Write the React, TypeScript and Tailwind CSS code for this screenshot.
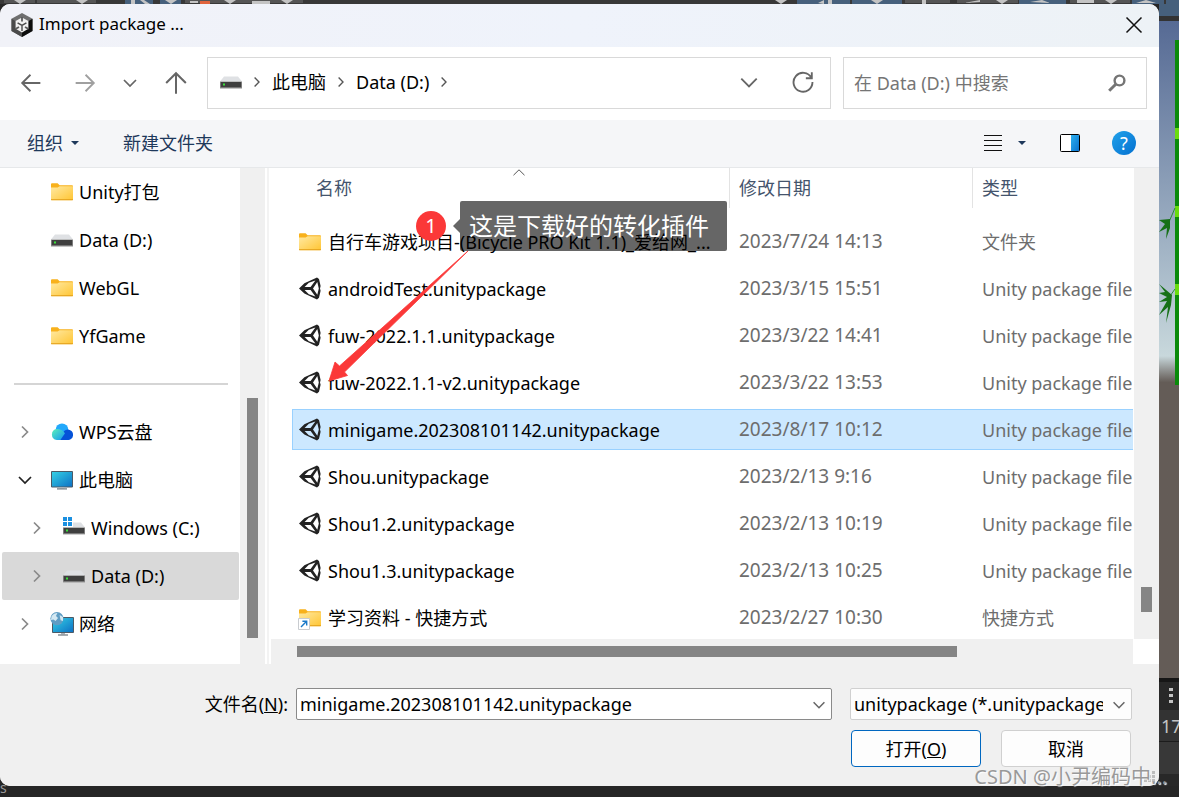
import type { ReactNode } from "react";

const FolderIcon = () => (
	<svg width="22" height="18" viewBox="0 0 22 18" className="shrink-0">
		<defs>
			<linearGradient id="folder" x1="0" y1="0" x2="1" y2="1">
				<stop offset="0" stopColor="#ffe9a2" />
				<stop offset="1" stopColor="#ffc533" />
			</linearGradient>
		</defs>
		<path d="M0 1.2Q0 .2 1 .2H6.6L8.6 2.2H21Q22 2.2 22 3.2V8H0Z" fill="#f8b11c" />
		<path d="M0 4.6H6.6L8.6 3.2H22V16.2Q22 17.2 21 17.2H1Q0 17.2 0 16.2Z" fill="url(#folder)" />
		<path d="M0 16.7H22" stroke="#e3a01c" />
	</svg>
);

const ShortcutIcon = () => (
	<span className="relative flex shrink-0">
		<FolderIcon />
		<svg width="12" height="12" viewBox="0 0 12 12" className="absolute -bottom-[3px] -left-px">
			<path d="M.5.5H11.5V11.5H.5Z" fill="#fff" stroke="#c9ccd0" />
			<path d="M3 9L8.4 3.6M4.4 3.3H8.7V7.6" fill="none" stroke="#1878c8" strokeWidth="1.4" />
		</svg>
	</span>
);

const DriveIcon = ({ system = false }: { system?: boolean }) => (
	<svg width="22" height="18" viewBox="0 0 22 18" className="shrink-0 overflow-visible">
		<path d="M4 3.5H18L22 8.6H0Z" fill="#dfe1e4" />
		<path d="M0 8.4H22V15.4H0Z" fill="#8b8b8b" />
		<path d="M.8 9H21.2V14.2H.8Z" fill="#3f3f3f" />
		<path d="M3 10.4H5V12.4H3Z" fill="#3ae03a" />
		{system && (
			<>
				<path d="M0-2H10V8H0Z" fill="#fff" />
				<path d="M0-2H4V2H0ZM5-2H9V2H5ZM0 3H4V7H0ZM5 3H9V7H5Z" fill="#1a8fe0" />
			</>
		)}
	</svg>
);

const CloudIcon = () => (
	<svg width="22" height="18" viewBox="0 0 22 18" className="shrink-0">
		<defs>
			<linearGradient id="cloud" x1="0" y1="0" x2="1" y2="1">
				<stop offset="0" stopColor="#5af0b8" />
				<stop offset="1" stopColor="#1496f5" />
			</linearGradient>
		</defs>
		<circle cx="11" cy="6.8" r="6.4" fill="#22a8fb" />
		<circle cx="16.8" cy="11.8" r="5.3" fill="#0553d8" />
		<path d="M7 17L14 9L18 17Z" fill="#0553d8" />
		<path d="M5.8 6A5.6 5.6 0 0 0 5.8 17.1H9.4L14 10.2Q10.8 6 5.8 6Z" fill="url(#cloud)" />
	</svg>
);

const MonitorIcon = () => (
	<svg width="22" height="20" viewBox="0 0 22 20" className="shrink-0">
		<defs>
			<linearGradient id="screen" x1="0" y1="0" x2="1" y2="1">
				<stop offset="0" stopColor="#35d3e6" />
				<stop offset="1" stopColor="#0d6fc4" />
			</linearGradient>
		</defs>
		<path d="M.5 1.5H21.5V17H.5Z" fill="url(#screen)" stroke="#4c5a66" />
		<path d="M8.6 17H13.4V18.4H8.6Z" fill="#a9b1b8" />
		<path d="M6 18.9H16" stroke="#6b747c" strokeWidth="1.2" />
	</svg>
);

const NetworkIcon = () => (
	<svg width="24" height="24" viewBox="0 0 24 24" className="-mr-px -ml-px shrink-0">
		<path d="M2.5 5.5H23.5V20.5H2.5Z" fill="url(#screen)" stroke="#4c5a66" />
		<path d="M11 21H15V22.4H11Z" fill="#a9b1b8" />
		<path d="M8 23H18" stroke="#6b747c" strokeWidth="1.2" />
		<circle cx="7" cy="6.6" r="6.6" fill="#5f9dc4" />
		<path d="M1.6 4Q4 .8 7.4 1L6 4L8 6L5.6 9L3.4 7.4L1 8ZM9.6 3L13 5V9L10.6 8.2Z" fill="#d3e8f2" />
	</svg>
);

const HexIcon = () => (
	<svg width="22" height="24" viewBox="0 0 22 24" className="shrink-0">
		<path d="M11 0L21.5 5.8V18L11 24L.5 18V5.8Z" fill="#6f6f6f" />
		<path d="M11 12L21.5 5.8V18L11 24Z" fill="#0c0c0c" />
		<path d="M11 12L.5 5.8V18L11 24Z" fill="#4a4a4a" />
		<path d="M11 4.4L17.4 8V15.8L11 19.6L4.6 15.8V8Z" fill="#f1f1f1" />
		<path d="M11 4V8.6M4.4 16L8 14M17.6 16L14 14" stroke="#5a5a5a" strokeWidth="1.8" />
		<path d="M11 12.4V18M11 12.4L6.6 9.8M11 12.4L15.4 9.8" stroke="#4a4a4a" strokeWidth="1.4" />
	</svg>
);

const UnityIcon = () => (
	<svg width="22" height="24" viewBox="0 0 22 24" className="shrink-0">
		<path
			fill="#222"
			fillRule="evenodd"
			d="M0 11.4L5.4 6.2L18 .4L20 2L21.6 9L21 11.4L21.6 13.8L20 20.8L18 22.6L5.4 16.6ZM5.6 9.9H11.6L16.4 3.6L9.8 5.8ZM5.6 12.9L9.8 17.2L16.4 19.4L11.6 12.9ZM14 11.4L18.3 17.8L19.8 11.4L18.3 5Z"
		/>
	</svg>
);

// Line glyph used for every arrow and chevron
const Stroke = ({ d, size, className = "" }: { d: string; size: number; className?: string }) => (
	<svg
		width={size}
		height={size}
		viewBox="0 0 20 20"
		fill="none"
		stroke="currentColor"
		strokeWidth="1.7"
		className={`shrink-0 ${className}`}
	>
		<path d={d} />
	</svg>
);

const RIGHT = "M7 4.5L12.5 10L7 15.5";
const DOWN = "M4 7L10 13L16 7";

const Caret = () => (
	<svg width="8" height="4" viewBox="0 0 8 4" className="shrink-0">
		<path d="M0 0H8L4 4Z" fill="#1e395b" />
	</svg>
);

type TreeItem = {
	label: string;
	icon: ReactNode;
	state?: "open" | "closed";
	nested?: boolean;
	selected?: boolean;
};

const pinned: TreeItem[] = [
	{ label: "Unity打包", icon: <FolderIcon /> },
	{ label: "Data (D:)", icon: <DriveIcon /> },
	{ label: "WebGL", icon: <FolderIcon /> },
	{ label: "YfGame", icon: <FolderIcon /> },
];

const places: TreeItem[] = [
	{ label: "WPS云盘", icon: <CloudIcon />, state: "closed" },
	{ label: "此电脑", icon: <MonitorIcon />, state: "open" },
	{ label: "Windows (C:)", icon: <DriveIcon system />, state: "closed", nested: true },
	{ label: "Data (D:)", icon: <DriveIcon />, state: "closed", nested: true, selected: true },
	{ label: "网络", icon: <NetworkIcon />, state: "closed" },
];

const files = [
	{ name: "自行车游戏项目-(Bicycle PRO Kit 1.1)_爱给网_...", date: "2023/7/24 14:13", type: "文件夹" },
	{ name: "androidTest.unitypackage", date: "2023/3/15 15:51", type: "Unity package file" },
	{ name: "fuw-2022.1.1.unitypackage", date: "2023/3/22 14:41", type: "Unity package file" },
	{ name: "fuw-2022.1.1-v2.unitypackage", date: "2023/3/22 13:53", type: "Unity package file" },
	{
		name: "minigame.202308101142.unitypackage",
		date: "2023/8/17 10:12",
		type: "Unity package file",
		selected: true,
	},
	{ name: "Shou.unitypackage", date: "2023/2/13 9:16", type: "Unity package file" },
	{ name: "Shou1.2.unitypackage", date: "2023/2/13 10:19", type: "Unity package file" },
	{ name: "Shou1.3.unitypackage", date: "2023/2/13 10:25", type: "Unity package file" },
	{ name: "学习资料 - 快捷方式", date: "2023/2/27 10:30", type: "快捷方式" },
];

const FileIcon = ({ type }: { type: string }) => {
	if (type === "文件夹") return <FolderIcon />;
	if (type === "快捷方式") return <ShortcutIcon />;
	return <UnityIcon />;
};

const TreeRow = ({ item }: { item: TreeItem }) => (
	<li className="pr-px pl-0.5">
		<button
			className={`flex h-12 w-full items-center rounded-xs whitespace-nowrap ${
				item.nested ? "pl-[25px]" : "pl-[13px]"
			} ${item.selected ? "bg-[#d9d9d9]" : ""}`}
		>
			<span className="flex w-9 shrink-0">
				{item.state === "closed" && <Stroke d={RIGHT} size={20} className="text-[#8a8a8a]" />}
				{item.state === "open" && <Stroke d={DOWN} size={20} className="text-[#222]" />}
			</span>
			{item.icon}
			<span className="ml-1.5">{item.label}</span>
		</button>
	</li>
);

const TitleBar = () => (
	<header className="flex h-[43px] items-center bg-linear-to-r from-[#f1f2f8] via-[#eff3fb] to-[#edf2f6] pr-4 pb-0.5 pl-[11px]">
		<HexIcon />
		<h1 className="ml-1.5 grow text-[17px]">Import package ...</h1>
		<button aria-label="Close">
			<svg width="18" height="18" viewBox="0 0 18 18" stroke="#111" strokeWidth="1.5">
				<path d="M1.5 1.5L16.5 16.5M16.5 1.5L1.5 16.5" />
			</svg>
		</button>
	</header>
);

const NavBar = () => (
	<nav className="flex h-[73px] items-center gap-3 bg-white px-3 pb-px">
		<div className="flex w-[183px] items-center text-[#666]">
			<button aria-label="Back" className="ml-2">
				<Stroke d="M18.5 10H2M9.5 2.5L2 10L9.5 17.5" size={22} />
			</button>
			<button aria-label="Forward" className="ml-8 text-[#a0a0a0]">
				<Stroke d="M1.5 10H18M10.5 2.5L18 10L10.5 17.5" size={22} />
			</button>
			<button aria-label="Recent" className="ml-6">
				<Stroke d={DOWN} size={20} />
			</button>
			<button aria-label="Up" className="ml-6">
				<Stroke d="M10 19V1.8M1.8 10L10 1.8L18.2 10" size={24} />
			</button>
		</div>
		<div className="flex h-13 grow items-center border border-[#d9d9d9] pr-4 pb-0.5 pl-3">
			<DriveIcon />
			<Stroke d={RIGHT} size={16} className="mx-[7px] text-[#555]" />
			<button>此电脑</button>
			<Stroke d={RIGHT} size={16} className="mx-[7px] text-[#555]" />
			<button>Data (D:)</button>
			<Stroke d={RIGHT} size={16} className="mx-[7px] text-[#555]" />
			<button aria-label="History" className="mr-8 ml-auto text-[#666]">
				<Stroke d="M3 7L10 14L17 7" size={22} />
			</button>
			<button aria-label="Refresh" className="text-[#666]">
				<Stroke d="M17.6 6.2A8.6 8.6 0 1 0 18.6 10M18 1.2V6.6H12.6" size={22} />
			</button>
		</div>
		<div className="flex h-13 w-[304px] items-center border border-[#d9d9d9] pr-5 pl-[10px]">
			<input
				aria-label="Search"
				placeholder="在 Data (D:) 中搜索"
				className="w-full min-w-0 grow outline-none placeholder:text-[#757575]"
			/>
			<svg width="18" height="18" viewBox="0 0 18 18" fill="none" stroke="#757575" className="shrink-0">
				<circle cx="11.5" cy="6.5" r="4.9" strokeWidth="2.4" />
				<path d="M8 10L1.2 16.8" strokeWidth="3" />
			</svg>
		</div>
	</nav>
);

const Toolbar = () => (
	<div className="flex h-12 items-center border-b border-[#e6e8ea] bg-[#f5f6f8] pr-[23px] pb-0.5 pl-[27px] text-[#1e395b]">
		<button className="flex items-center gap-2">
			组织
			<Caret />
		</button>
		<button className="ml-11 grow text-left">新建文件夹</button>
		<button aria-label="View" className="flex items-center gap-4">
			<svg width="18" height="18" viewBox="0 0 18 18" stroke="#111" className="mt-px">
				<path d="M0 1.5H18M0 6.5H18M0 11.5H18M0 16.5H18" />
			</svg>
			<Caret />
		</button>
		<button aria-label="Preview pane" className="ml-[34px]">
			<svg width="20" height="18" viewBox="0 0 20 18">
				<defs>
					<linearGradient id="pane" x1="0" y1="0" x2="1" y2="1">
						<stop offset="0" stopColor="#2cb0ee" />
						<stop offset="1" stopColor="#0a72d0" />
					</linearGradient>
				</defs>
				<rect x=".5" y=".5" width="19" height="17" rx="1" fill="#fff" stroke="#000" />
				<path d="M11 1H19V17H11Z" fill="url(#pane)" />
			</svg>
		</button>
		<button
			aria-label="Help"
			className="ml-8 size-6 rounded-full bg-linear-to-br from-[#22a2ea] to-[#0570d0] text-center leading-6 text-white"
		>
			?
		</button>
	</div>
);

const Sidebar = () => (
	<div className="flex shrink-0">
		<ul className="w-60 pb-4">
			{pinned.map((item) => (
				<TreeRow key={item.label} item={item} />
			))}
			<li className="flex h-12 items-center pr-3 pl-[14px]">
				<hr className="w-full border-t-2 border-[#d5d5d5]" />
			</li>
			{places.map((item) => (
				<TreeRow key={item.label} item={item} />
			))}
		</ul>
		<div className="flex w-[25px] flex-col items-center justify-end bg-[#f0f0f0] pb-[26px]">
			<div className="h-60 w-[11px] bg-[#858585]" />
		</div>
		<div className="ml-0.5 w-0.5 bg-[#f3f3f3]" />
	</div>
);

const FileTable = () => (
	<table className="w-full table-fixed border-separate border-spacing-0 text-left whitespace-nowrap">
		<thead>
			<tr className="text-[#44546c]">
				<th className="w-[438px] p-0 pb-[7px] font-normal">
					<div className="relative h-10 border-r border-[#e3e3e3] pt-2 pl-6 leading-6">
						名称
						<svg
							width="12"
							height="7"
							viewBox="0 0 12 7"
							fill="none"
							stroke="#555"
							className="absolute top-px left-[calc(50%+2px)]"
						>
							<path d="M.5 6.2L6 .8L11.5 6.2" />
						</svg>
					</div>
				</th>
				<th className="w-[243px] p-0 pb-[7px] font-normal">
					<div className="h-10 border-r border-[#e3e3e3] pt-2 pl-[9px] leading-6">修改日期</div>
				</th>
				<th className="p-0 pb-[7px] font-normal">
					<div className="h-10 pt-2 pl-[9px] leading-6">类型</div>
				</th>
			</tr>
		</thead>
		<tbody>
			{files.map(({ name, date, type, selected }) => {
				const tone = selected ? "border-y border-[#99d1ff] bg-[#cce8ff]" : "";
				return (
					<tr key={name} className="text-[#6d6d6d]">
						<td className="p-0 pt-1.5">
							<div
								className={`flex h-[41px] items-center gap-[7px] text-black ${tone} ${
									selected ? "border-l pl-1.5" : "pl-[7px]"
								}`}
							>
								<FileIcon type={type} />
								{name}
							</div>
						</td>
						<td className="p-0 pt-1.5">
							<div className={`flex h-[41px] items-center pl-[9px] text-[19px] ${tone}`}>{date}</div>
						</td>
						<td className="overflow-hidden p-0 pt-1.5">
							<div className={`flex h-[41px] items-center pl-[9px] ${tone}`}>{type}</div>
						</td>
					</tr>
				);
			})}
		</tbody>
	</table>
);

const FilePane = () => (
	<div className="flex min-w-0 grow flex-col">
		<div className="flex grow">
			<div className="min-w-0 grow pr-px pl-[23px]">
				<FileTable />
			</div>
			<div className="flex w-[25px] shrink-0 flex-col items-center justify-end bg-[#f0f0f0] pb-[27px]">
				<div className="h-[25px] w-[11px] bg-[#858585]" />
			</div>
		</div>
		<div className="mr-[26px] ml-0.5 flex h-[25px] items-center bg-[#f0f0f0] pl-[26px]">
			<div className="h-[11px] w-[79%] bg-[#858585]" />
		</div>
	</div>
);

const Footer = () => (
	<footer className="bg-[#f0f0f0] pt-6 pr-[27px] pb-[19px]">
		<div className="flex items-center">
			<label htmlFor="filename" className="w-72 shrink-0 text-right">
				文件名(<u>N</u>):
			</label>
			<div className="relative ml-2 grow">
				<input
					id="filename"
					defaultValue="minigame.202308101142.unitypackage"
					className="h-8 w-full rounded-xs border border-[#8a8a8a] bg-white px-[3px] outline-none"
				/>
				<Stroke d={DOWN} size={18} className="absolute top-2 right-1 text-[#666]" />
			</div>
			<div className="relative ml-[18px] w-[282px] shrink-0">
				<select
					aria-label="File type"
					className="h-8 w-full appearance-none rounded-xs border border-[#d0d0d0] bg-[#fdfdfd] pr-7 pl-[3px]"
				>
					<option>unitypackage (*.unitypackage)</option>
				</select>
				<Stroke d={DOWN} size={18} className="absolute top-2 right-1 text-[#666]" />
			</div>
		</div>
		<div className="mt-[10px] flex justify-end gap-5 pr-px">
			<button className="h-[37px] w-[130px] rounded border border-[#0067c0] bg-[#fdfdfd]">
				打开(<u>O</u>)
			</button>
			<button className="h-[37px] w-[130px] rounded border border-[#d0d0d0] bg-[#fdfdfd]">取消</button>
		</div>
	</footer>
);

// Numbered callout pinned over the file list
const Annotation = () => (
	<div className="pointer-events-none absolute top-[197px] left-[329px]">
		<svg width="140" height="182" viewBox="0 0 140 182" className="absolute top-0 left-0">
			<path d="M0 180L6 161L10.5 165L139 50L15.5 171L18.5 174.5Z" fill="#fb3838" stroke="#fb3838" strokeWidth=".8" />
		</svg>
		<div className="absolute top-[10px] left-[87px] size-[30px] rounded-full bg-[#fb3838] text-center text-xl leading-[30px] text-white">
			1
		</div>
		<div className="absolute top-0 left-[131px] flex h-[50px] items-center rounded-xs bg-black/60 pr-[18px] pl-[9px] text-2xl whitespace-nowrap text-white">
			<svg width="7" height="14" viewBox="0 0 7 14" className="absolute top-[18px] -left-[7px]">
				<path d="M7 0V14L0 7Z" fill="#000" fillOpacity=".6" />
			</svg>
			这是下载好的转化插件
		</div>
	</div>
);

const EditorTop = () => (
	<div className="h-1 overflow-hidden bg-[#383838]">
		<svg width="1179" height="4" viewBox="0 0 1179 4">
			<path d="M4 0H35V3H4ZM37 0H96V3H37ZM185 0H303V3H185ZM905 0H950V3H905ZM957 0H1018V3H957ZM1070 0H1130V3H1070Z" fill="#555" />
			<path d="M125 0H153V4H125ZM160 0H181V4H160ZM797 0H850V4H797ZM852 0H902V4H852ZM1019 0H1066V4H1019ZM1132 0H1164V4H1132ZM1166 0H1179V4H1166Z" fill="#46607c" />
			<path d="M200 1H210V4H200Z" fill="#e0633c" />
			<path
				d="M14 0H26L20 4ZM76 0H88L82 4ZM165 0H177L171 4ZM224 0H236L230 4ZM281 0H293L287 4ZM775 0H787L781 4ZM871 0H883L877 4ZM996 0H1008L1002 4ZM1105 0H1117L1111 4ZM131 0H135V4H131ZM140 0H144L150 4H145ZM190 1H198V3H190ZM252 1H270V4H252ZM818 3L824 0V4ZM828 0H832V4H828ZM922 0H926V4H922ZM964 3L980 0V2ZM1030 2L1042 0L1050 3ZM1077 0H1094V3H1077ZM1136 3L1146 0L1156 3Z"
				fill="#c4c4c4"
			/>
		</svg>
	</div>
);

const EditorSide = () => (
	<aside className="flex w-5 shrink-0 flex-col overflow-hidden text-[#c4c4c4]">
		<div className="h-3 bg-[#46607c]" />
		<div className="h-[5px] bg-[#333]" />
		<div className="grow bg-linear-to-b from-[#566a94] from-0% via-[#c8d8dc] via-51% to-[#645c57] to-55%">
			<svg width="20" height="380" viewBox="0 0 20 380">
				<path d="M16 19H20V364H16Z" fill="#0a8a0a" />
				<path d="M16 107H20V118H16ZM16 185H20V196H16ZM16 263H20V274H16Z" fill="#6adc10" />
				<path d="M16 187L10 201M16 268L11 275" stroke="#2a8a3a" fill="none" />
				<path
					d="M11 198L0 199L6 203L0 211L8 207L7 218L11 207ZM13 274L0 263L6 271L0 272L8 276L0 281L8 280L0 294L9 286L7 302L12 284Z"
					fill="#167016"
				/>
			</svg>
		</div>
		<div className="flex h-8 items-center border-t-4 border-[#161616] bg-[#282828] pl-[10px]">
			<svg width="4" height="16" viewBox="0 0 4 16" fill="#c4c4c4">
				<path d="M0 0H4V3H0ZM0 6H4V9H0ZM0 12H4V15H0Z" />
			</svg>
		</div>
		<div className="h-8 border-b border-[#1c1c1c] bg-[#333] pl-0.5 leading-8">17</div>
		<div className="h-8 bg-[#383838]" />
		<div className="h-3 bg-[#282828]" />
	</aside>
);

export default function App() {
	return (
		<main className="relative min-h-screen overflow-hidden bg-[#262626] font-['Noto_Sans','Noto_Sans_CJK_SC',sans-serif] text-lg text-black">
			<EditorTop />
			<div className="flex">
				<section className="relative min-w-0 grow overflow-hidden rounded-[10px] bg-white">
					<TitleBar />
					<NavBar />
					<Toolbar />
					<div className="flex">
						<Sidebar />
						<FilePane />
					</div>
					<Footer />
					<Annotation />
					<svg width="11" height="11" viewBox="0 0 11 11" fill="#bdbdbd" className="absolute right-1 bottom-1">
						<path d="M8 0H11V3H8ZM4 4H7V7H4ZM8 4H11V7H8ZM0 8H3V11H0ZM4 8H7V11H4ZM8 8H11V11H8Z" />
					</svg>
				</section>
				<EditorSide />
			</div>
			<p className="h-[11px] text-sm leading-1 text-[#9a9a9a]">s</p>
			<p className="absolute right-3 bottom-1 text-xl leading-8 text-[#999] text-shadow-[1px_1px_1px_#ffffff]">
				CSDN @小尹编码中...
			</p>
		</main>
	);
}
